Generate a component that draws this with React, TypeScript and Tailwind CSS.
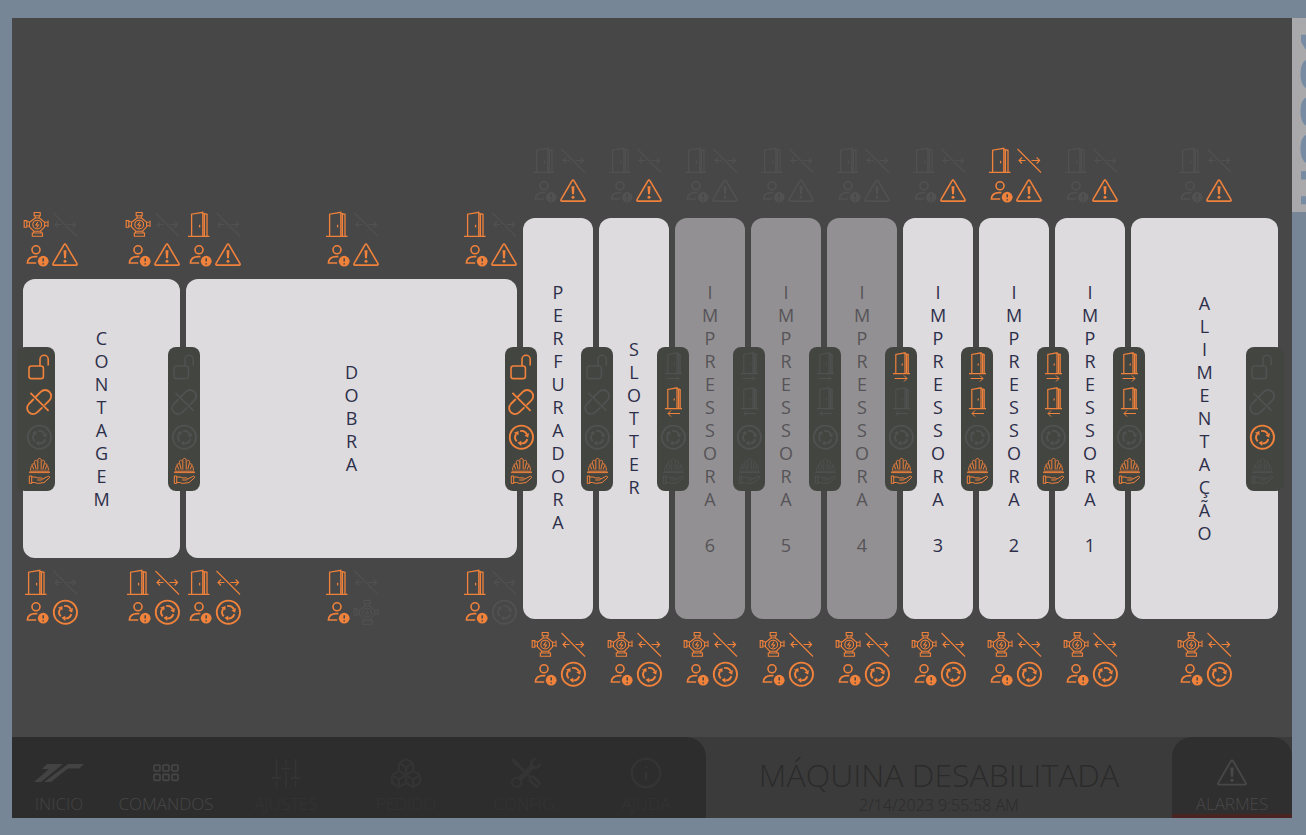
import type { ReactNode } from "react";
import { Boxes, Info } from "lucide-react";
import { BsTools } from "react-icons/bs";

type IconName = "pump" | "door" | "arrows" | "person" | "warning" | "cycle" | "lock" | "unlink" | "helmet" | "doorRight" | "doorLeft";
type Cell = [IconName, boolean];

const smallDoor = (
  <path d="M2 21.6h17M4.8 21.6V2.4l9.2-1.6v20.8M14 1.6l3.2.9v19.1M15.6 2v19.6M11.2 11.6v1.8" />
);

const drawings: Record<IconName, ReactNode> = {
  pump: (
    <g strokeWidth="1.1">
      <path d="M11.2 1.5h6v3.3h-6zM12.2 4.8v2.4M16.2 4.8v2.4M10.5 8.2l1.5-1.2h4.5l1.5 1.2 3.6 3v4.6l-4.2 4.4H10.8l-4.3-4.4v-4.6z" />
      <path d="M1.2 9.6h2.6v6.6H1.2zM3.8 10.8h2.7M3.8 15h2.7M21.6 11.2h2.6M21.6 14.8h2.6M25 9.6v6.4M9.3 22h10.2v3.2H9.3zM10.6 20.2V22M18 20.2V22" />
      <circle cx="14.2" cy="13.6" r="4.4" />
      <path d="M15 10.8l-2.2 3.2h2.8l-2 2.8" />
    </g>
  ),
  door: (
    <g strokeWidth="1.3">
      <path d="M2 25.400h21.500M5.600 25V3.200l11.200-1.900V25M16.800 2.300l4.200 1V25M18.400 2.800V25" />
      <path d="M13.600 13.800v2.600" />
    </g>
  ),
  arrows: (
    <g strokeWidth="1.1">
      <path d="M1.5 2L25 25.5M9.5 13.5H3M6 10.5l-3 3 3 3M15.5 13.5h8M20.6 10.5l3 3-3 3" />
    </g>
  ),
  person: (
    <g strokeWidth="1.6">
      <circle cx="13" cy="7.8" r="4" />
      <path d="M13.2 21H4.4c.2-4.6 3.6-6.4 8-6.4h2" />
      <circle cx="20.2" cy="19.2" r="5.4" fill="currentColor" stroke="none" />
      <path d="M20.2 16.2v3.4M20.2 21.2v1.2" stroke="#474747" strokeWidth="1.5" />
    </g>
  ),
  warning: (
    <g strokeWidth="1.6">
      <path d="M12.1 2.6a1 1 0 0 1 1.8 0L25 21.7a.9.9 0 0 1-.8 1.4H1.8A.9.9 0 0 1 1 21.7z" />
      <path d="M11.5 8.2h3l-.5 8h-2z" fill="currentColor" stroke="none" />
      <circle cx="13" cy="19.2" r="1.5" fill="currentColor" stroke="none" />
    </g>
  ),
  cycle: (
    <g strokeWidth="1.9">
      <circle cx="13.4" cy="13.2" r="11.6" />
      {["rotate(0 13.4 13.2)", "rotate(120 13.4 13.2)", "rotate(240 13.4 13.2)"].map((turn) => (
        <g key={turn} transform={turn}>
          <path d="M12.1 7.1A6.2 6.2 0 0 1 18.900 10.300" />
          <path d="M21 8.9L16.500 11.600l3.700 2.200z" fill="currentColor" stroke="none" />
        </g>
      ))}
    </g>
  ),
  lock: (
    <g strokeWidth="1.6">
      <rect x="3" y="12" width="14.4" height="12.6" rx="2.4" />
      <path d="M14 12V5.4a4.1 4.1 0 0 1 8.2 0v6" />
    </g>
  ),
  unlink: (
    <g strokeWidth="1.8">
      <path d="M9.6 8L14.8 2.8A6 6 0 0 1 23.4 11.4L18.6 16.2M7.8 10L2.8 15A5.6 5.6 0 0 0 11.4 23.2L16.4 18.4M4.4 3.8L22.6 21.8" />
    </g>
  ),
  helmet: (
    <g strokeWidth="1">
      <path d="M3.4 13.6c0-.9.6-1.4 1.4-1.4h17.4c.8 0 1.400.5 1.400 1.400z" />
      <path d="M11.800 10.500V1.200c0-2.400 3.400-2.400 3.400 0v9.300M10.200 10.500L8.400 3.200c-.4-2 2-2.600 2.600-.8M16.800 10.500l1.800-7.300c.4-2-2-2.600-2.600-.8" />
      <path d="M7.800 10.500L6.200 6.400c-.6-1.800 1.400-2.400 2-.8M19.200 10.500l1.600-4.100c.6-1.800-1.400-2.400-2-.8M4.600 11.200c0-2 .4-3.600 1.400-4.800M22.400 11.200c0-2-.4-3.600-1.400-4.800" />
      <path d="M3.3 17h2.4v7.400H3.3zM5.700 18h3.400l2.400.9h3.800c1.600 0 1.600 2.100 0 2.100h-4.100M16.800 20l5-2.600c1.400-.6 2.400.6 1.400 1.600l-5.200 4.600-6.400.8-3-.9H5.700" />
    </g>
  ),
  doorRight: (
    <g strokeWidth="1.2">
      {smallDoor}
      <path d="M3.6 26.5h12.4M13 23.5l3 3-3 3" strokeWidth="1" />
    </g>
  ),
  doorLeft: (
    <g strokeWidth="1.2">
      {smallDoor}
      <path d="M17 26.5H5M8 23.5l-3 3 3 3" strokeWidth="1" />
    </g>
  ),
};

function Icon({ cell }: { cell: Cell }) {
  const [name, on] = cell;
  const tall = name === "doorRight" || name === "doorLeft";
  return (
    <span className={`flex size-[26px] items-center justify-center ${on ? "text-[#f0823c]" : "text-[#505150]"}`}>
      <svg
        viewBox={tall ? "0 0 20 30" : "0 0 26 26"}
        className={tall ? "h-[30px] w-5 shrink-0" : "size-[26px] shrink-0 overflow-visible"}
        fill="none"
        stroke="currentColor"
        aria-hidden="true"
      >
        {drawings[name]}
      </svg>
    </span>
  );
}

function Quad({ cells, spacing }: { cells: Cell[]; spacing: string }) {
  return (
    <div className={`grid grid-cols-[26px_26px] gap-x-[3px] ${spacing}`}>
      {cells.map((cell) => (
        <Icon key={cell[0]} cell={cell} />
      ))}
    </div>
  );
}

const quad = (a: IconName, b: IconName, c: IconName, d: IconName, flags: string): Cell[] =>
  [a, b, c, d].map((n, i) => [n as IconName, flags[i] === "1"]);

const doorTop = (flags: string) => quad("door", "arrows", "person", "warning", flags);
const pumpTop = (flags: string) => quad("pump", "arrows", "person", "warning", flags);
const doorBottom = (flags: string) => quad("door", "arrows", "person", "cycle", flags);
const pumpBottom = quad("pump", "arrows", "person", "cycle", "1111");
const gate = (flags: string) => quad("lock", "unlink", "cycle", "helmet", flags);
const pass = (flags: string) => quad("doorRight", "doorLeft", "cycle", "helmet", flags);

type Unit = {
  name: string;
  wide?: boolean;
  disabled?: boolean;
  top: Cell[][];
  bottom: Cell[][];
  link: Cell[];
  endLink?: Cell[];
};

const units: Unit[] = [
  { name: "CONTAGEM", wide: true, top: [pumpTop("1011"), pumpTop("1011")], bottom: [doorBottom("1011"), doorBottom("1111")], link: gate("1101") },
  {
    name: "DOBRA",
    wide: true,
    top: [doorTop("1011"), doorTop("1011"), doorTop("1011")],
    bottom: [doorBottom("1111"), quad("door", "arrows", "person", "pump", "1010"), doorBottom("1010")],
    link: gate("0001"),
  },
  { name: "PERFURADORA ", top: [doorTop("0001")], bottom: [pumpBottom], link: gate("1111") },
  { name: "SLOTTER", top: [doorTop("0001")], bottom: [pumpBottom], link: gate("0001") },
  { name: "IMPRESSORA 6", disabled: true, top: [doorTop("0000")], bottom: [pumpBottom], link: pass("0100") },
  { name: "IMPRESSORA 5", disabled: true, top: [doorTop("0000")], bottom: [pumpBottom], link: pass("0000") },
  { name: "IMPRESSORA 4", disabled: true, top: [doorTop("0000")], bottom: [pumpBottom], link: pass("0000") },
  { name: "IMPRESSORA 3", top: [doorTop("0001")], bottom: [pumpBottom], link: pass("1001") },
  { name: "IMPRESSORA 2", top: [doorTop("1111")], bottom: [pumpBottom], link: pass("1101") },
  { name: "IMPRESSORA 1", top: [doorTop("0001")], bottom: [pumpBottom], link: pass("1101") },
  { name: "ALIMENTAÇÃO", top: [doorTop("0001")], bottom: [pumpBottom], link: pass("1101"), endLink: gate("0010") },
];

function Link({ cells, place }: { cells: Cell[]; place: "first" | "between" | "last" }) {
  const position = {
    first: "-left-1.5 w-[38px] pl-1.5",
    between: "-left-[18px] w-8",
    last: "-right-1.5 w-[38px] pr-1.5",
  }[place];
  return (
    <div className={`absolute top-1/2 z-10 flex -translate-y-1/2 flex-col items-center gap-[9px] rounded-lg bg-[#434541] pt-[7px] pb-1.5 ${position}`}>
      {cells.map((cell) => (
        <Icon key={cell[0]} cell={cell} />
      ))}
    </div>
  );
}

function UnitColumn({ unit, first }: { unit: Unit; first: boolean }) {
  const spread = unit.top.length > 1 ? "justify-between" : "justify-center";
  return (
    <section className="flex flex-col">
      <div className={`flex h-[71px] items-end ${spread} ${unit.wide ? "pb-[11px]" : "pb-[14px]"}`}>
        {unit.top.map((cells, i) => (
          <Quad key={i} cells={cells} spacing="gap-y-[5px]" />
        ))}
      </div>
      <div
        className={`relative flex items-center justify-center rounded-xl ${unit.wide ? "h-[279px]" : "h-[401px]"} ${
          unit.disabled ? "bg-[#929092] text-[#565458]" : "bg-[#dddbde] text-[#2d2f4a]"
        }`}
      >
        <h2 className="whitespace-pre text-center text-lg leading-[23px]">{unit.name.split("").join("\n")}</h2>
        <Link cells={unit.link} place={first ? "first" : "between"} />
        {unit.endLink && <Link cells={unit.endLink} place="last" />}
      </div>
      <div className={`flex h-[71px] items-start ${spread} ${unit.wide ? "pt-[11px]" : "pt-3"}`}>
        {unit.bottom.map((cells, i) => (
          <Quad key={i} cells={cells} spacing="gap-y-1" />
        ))}
      </div>
    </section>
  );
}

function Brand() {
  return (
    <svg viewBox="0 0 50 18" className="h-[18px] w-[50px]" fill="currentColor" aria-hidden="true">
      <path d="M13 0h16L7 18H0l15-13H8zM34 0h16l-5 4.4H34L17 18h-7z" />
    </svg>
  );
}

function KeyGrid() {
  return (
    <svg viewBox="0 0 26 18" className="h-[18px] w-[26px]" fill="none" stroke="currentColor" strokeWidth="1.6" aria-hidden="true">
      {[1, 10, 19].map((x) => (
        <g key={x}>
          <rect x={x} y="1" width="6" height="6" rx="1" />
          <rect x={x} y="10.4" width="6" height="6" rx="1" />
        </g>
      ))}
    </svg>
  );
}

function Sliders() {
  return (
    <svg viewBox="0 0 30 30" className="size-[30px]" fill="none" stroke="currentColor" strokeWidth="1.8" aria-hidden="true">
      <path d="M5.5 1v18M5.5 23v6M1 20h9M15 1v7M15 13v16M10.5 10.5h9M24.5 1v18M24.5 23v6M20 20h9" />
    </svg>
  );
}

function NavButton({ label, icon, className }: { label: string; icon: ReactNode; className: string }) {
  return (
    <button type="button" className={`flex flex-col items-center pt-5 text-[17px] leading-6 font-light ${className}`}>
      <span className="flex h-8 items-center justify-center">{icon}</span>
      <span className="pt-[3px]">{label}</span>
    </button>
  );
}

export default function App() {
  return (
    <div className="flex min-h-screen items-start overflow-hidden bg-[#778696] pt-[18px] pb-[17px] pl-3 font-['Open_Sans','Noto_Sans',sans-serif]">
      <div className="flex min-h-[800px] flex-1 flex-col bg-[#474747]">
        <main className="flex flex-1 flex-col justify-center pt-[82px] pr-3.5 pl-[11px]">
          <div className="grid grid-cols-[157fr_331fr_repeat(8,70fr)_147fr] items-center gap-x-1.5">
            {units.map((unit, i) => (
              <UnitColumn key={unit.name} unit={unit} first={i === 0} />
            ))}
          </div>
        </main>
        <footer className="flex h-[81px] bg-[#3b3b3b]">
          <nav className="flex rounded-tr-[20px] bg-[#2d2d2d]">
            <NavButton label="INICIO" icon={<Brand />} className="w-[94px] text-[#434343]" />
            <NavButton label="COMANDOS" icon={<KeyGrid />} className="w-[120px] text-[#474747]" />
            <NavButton label="AJUSTES" icon={<Sliders />} className="w-[120px] text-[#343434]" />
            <NavButton label="PEDIDO" icon={<Boxes size={34} strokeWidth={1.6} />} className="w-[120px] text-[#343434]" />
            <NavButton label="CONFIG." icon={<BsTools size={30} />} className="w-[120px] text-[#343434]" />
            <NavButton label="AJUDA" icon={<Info size={34} strokeWidth={1.8} />} className="w-[120px] text-[#343434]" />
          </nav>
          <div className="flex flex-1 flex-col items-center pt-[18px] font-light text-[#2b2b2b]">
            <h1 className="text-[32px] leading-10">MÁQUINA DESABILITADA</h1>
            <p className="text-base leading-5">2/14/2023 9:55:58 AM</p>
          </div>
          <NavButton
            label="ALARMES"
            icon={
              <svg viewBox="0 0 26 26" className="size-[30px]" fill="none" stroke="currentColor" aria-hidden="true">
                {drawings.warning}
              </svg>
            }
            className="w-[120px] rounded-t-[20px] bg-[#2f2f2f] text-[#484848] shadow-[inset_0_-4px_0_#4a2323]"
          />
        </footer>
      </div>
      <aside className="flex h-[194px] w-3.5 overflow-hidden bg-[#a9a9ab] pl-[9px]">
        <span className="h-[194px] shrink-0 rotate-180 pt-1 font-['Liberation_Sans',sans-serif] text-[56px] leading-[38px] font-bold text-[#778ca3] [writing-mode:vertical-rl]">
          HSSS1
        </span>
      </aside>
    </div>
  );
}
